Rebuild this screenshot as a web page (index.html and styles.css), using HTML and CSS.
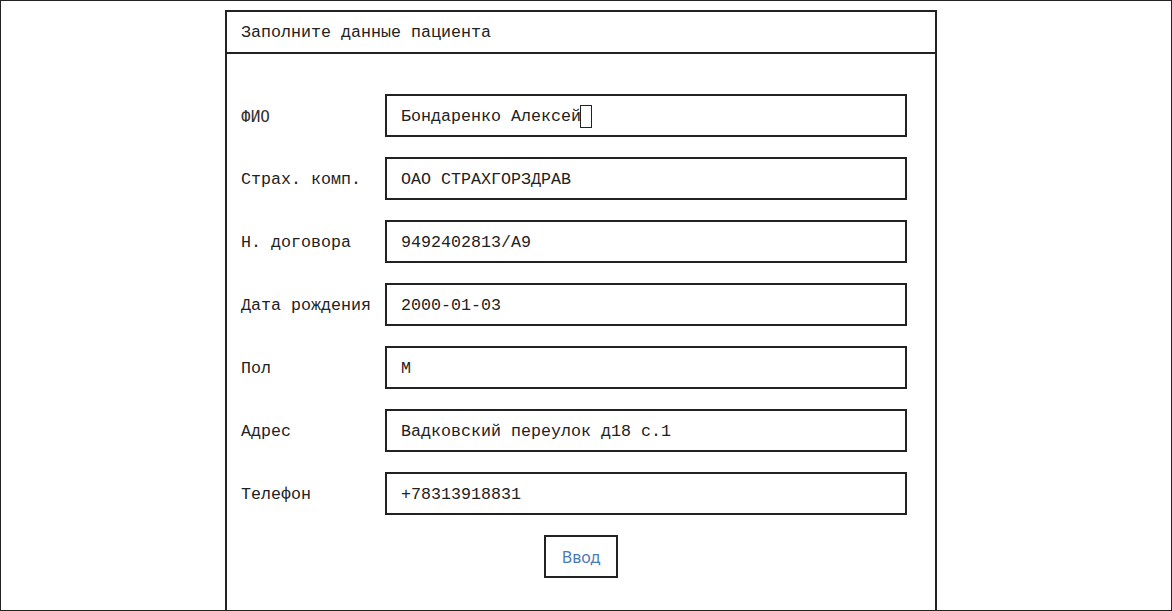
FILE: index.html
```html
<!DOCTYPE html>
<html lang="ru">
<head>
<meta charset="utf-8">
<title>Заполните данные пациента</title>
<link rel="stylesheet" href="styles.css">
</head>
<body>
<div class="screen">
  <div class="panel">
    <div class="panel-header">Заполните данные пациента</div>
    <div class="form">
      <div class="label label-alt">ФИО</div>
      <div class="field">Бондаренко Алексей<span class="caret"></span></div>
      <div class="label">Страх. комп.</div>
      <div class="field">ОАО СТРАХГОРЗДРАВ</div>
      <div class="label">Н. договора</div>
      <div class="field">9492402813/A9</div>
      <div class="label">Дата рождения</div>
      <div class="field">2000-01-03</div>
      <div class="label">Пол</div>
      <div class="field">М</div>
      <div class="label">Адрес</div>
      <div class="field">Вадковский переулок д18 с.1</div>
      <div class="label">Телефон</div>
      <div class="field">+78313918831</div>
    </div>
    <div class="actions">
      <button class="submit" type="button">Ввод</button>
    </div>
  </div>
</div>
</body>
</html>
```

FILE: styles.css
```css
html, body {
  margin: 0;
  padding: 0;
  background: #ffffff;
}

.screen {
  box-sizing: border-box;
  width: 1172px;
  height: 611px;
  border: 1px solid #222222;
  overflow: hidden;
  padding: 9px 0 0 224px;
  font-family: "Liberation Mono", "DejaVu Sans Mono", monospace;
  font-size: 16.67px;
  color: #222222;
}

.panel {
  box-sizing: border-box;
  width: 712px;
  height: 700px;
  border: 2px solid #222222;
}

.panel-header {
  height: 40px;
  box-sizing: border-box;
  padding: 2px 0 0 14px;
  line-height: 38px;
  border-bottom: 2px solid #222222;
  box-sizing: content-box;
  height: 38px;
}

.form {
  display: grid;
  grid-template-columns: 144px 1fr;
  row-gap: 20px;
  padding: 40px 28px 0 14px;
}

.label {
  display: flex;
  align-items: center;
  white-space: nowrap;
  padding-top: 2px;
}

.label-alt {
  font-family: "DejaVu Sans Mono", monospace;
  font-size: 16px;
  color: #333333;
}

.field {
  box-sizing: border-box;
  height: 43px;
  border: 2px solid #222222;
  padding: 2px 14px 0;
  display: flex;
  align-items: center;
  white-space: nowrap;
}

.caret {
  display: inline-block;
  box-sizing: border-box;
  width: 12px;
  height: 23px;
  border: 1px solid #222222;
  margin-left: -1px;
}

.actions {
  display: flex;
  justify-content: center;
  margin-top: 20px;
}

.submit {
  box-sizing: border-box;
  height: 43px;
  padding: 0 16px;
  border: 2px solid #222222;
  background: #ffffff;
  color: #4a7ab8;
  font-family: "Noto Sans", "DejaVu Sans", sans-serif;
  font-size: 16px;
  cursor: pointer;
}
```
